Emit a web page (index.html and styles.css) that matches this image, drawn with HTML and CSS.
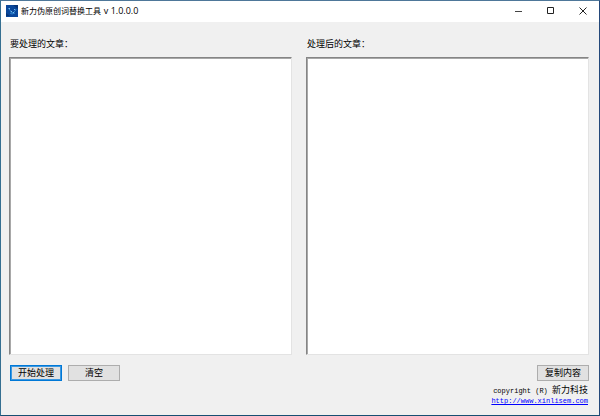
FILE: index.html
```html
<!DOCTYPE html>
<html lang="zh-CN">
<head>
<meta charset="utf-8">
<title>新力伪原创词替换工具</title>
<link rel="stylesheet" href="styles.css">
</head>
<body>
<div class="window">
  <header class="titlebar">
    <svg class="app-icon" viewBox="0 0 12 12" aria-hidden="true">
      <rect width="12" height="12" fill="#0a479b"/>
      <path d="M0 8L4 11H0zM7 0h5v4z" fill="#063477"/>
      <path d="M2 3l2 2 1 2 2 1 2-2 1-2M4 8l2 1 3-1" fill="none" stroke="#2e83cf"/>
      <path d="M3 3h1v1H3zM5 6h1v1H5zM8 4h1v1H8zM7 7h1v1H7z" fill="#79bce8"/>
    </svg>
    <h1 class="title">新力伪原创词替换工具 <span class="version">v 1.0.0.0</span></h1>
    <div class="controls">
      <button class="control" type="button" aria-label="最小化"><svg viewBox="0 0 8 8"><path d="M0 4.5h7" stroke="#444"/></svg></button>
      <button class="control" type="button" aria-label="最大化"><svg viewBox="0 0 8 8"><path d="M.5.5h6v6h-6z" stroke="#222"/></svg></button>
      <button class="control" type="button" aria-label="关闭"><svg viewBox="0 0 8 8"><path d="M.5.5l7 7M7.5.5l-7 7" stroke="#222"/></svg></button>
    </div>
  </header>
  <main class="content">
    <div class="panes">
      <div class="pane">
        <label class="label" for="source">要处理的文章：</label>
        <textarea class="editor" id="source"></textarea>
      </div>
      <div class="pane">
        <label class="label" for="result">处理后的文章：</label>
        <textarea class="editor" id="result"></textarea>
      </div>
    </div>
    <div class="actions">
      <button class="button primary" type="button">开始处理</button>
      <button class="button" type="button">清空</button>
      <button class="button copy" type="button">复制内容</button>
    </div>
    <footer class="footer">
      <div>copyright (R) <span class="company">新力科技</span></div>
      <a class="link" href="http://www.xinlisem.com">http://www.xinlisem.com</a>
    </footer>
  </main>
</div>
</body>
</html>
```
FILE: styles.css
```css
* {
  box-sizing: border-box;
}

body {
  margin: 0;
  font-family: "Noto Sans CJK SC", sans-serif;
  font-size: 9px;
  color: #000;
}

.window {
  display: flex;
  flex-direction: column;
  min-height: 100vh;
  background: #f0f0f0;
  border: 1px solid #356f91;
  border-top-color: #4e7799;
  border-right-color: #24487a;
  border-bottom-color: #174f72;
}

.titlebar {
  display: flex;
  align-items: center;
  height: 21px;
  padding: 0 0 2px 5px;
  background: #fff;
}

.app-icon {
  width: 12px;
  height: 12px;
  margin-right: 3px;
}

.title {
  flex: 1;
  margin: 0;
  font-size: 8px;
  font-weight: 400;
  line-height: 12px;
}

.version {
  margin-left: 1px;
  font-family: "Open Sans", sans-serif;
  font-size: 9px;
}

.controls {
  display: flex;
}

.control {
  display: flex;
  align-items: center;
  justify-content: center;
  width: 32px;
  height: 18px;
  padding: 0;
  border: 0;
  background: none;
}

.control svg {
  width: 8px;
  height: 8px;
  fill: none;
}

.content {
  display: flex;
  flex: 1;
  flex-direction: column;
  padding: 14px 10px 9px 8px;
}

.panes {
  display: grid;
  flex: 1;
  grid-template-columns: 1fr 1fr;
  gap: 14px;
}

.pane {
  display: flex;
  flex-direction: column;
}

.label {
  height: 21px;
  padding-left: 1px;
  line-height: 16px;
}

.editor {
  flex: 1;
  width: 100%;
  padding: 2px;
  border: 1px solid #e3e3e3;
  border-top-color: #858585;
  border-left-color: #858585;
  background: #fff;
  box-shadow: inset 1px 1px #a8a8a8;
  font: inherit;
  resize: none;
}

.actions {
  display: flex;
  gap: 6px;
  padding: 10px 0 0 1px;
}

.button {
  width: 52px;
  height: 16px;
  padding: 0;
  border: 1px solid #adadad;
  background: #e1e1e1;
  color: #000;
  font: inherit;
  line-height: 12px;
}

.primary {
  border-color: #0078d7;
  box-shadow: inset 0 0 0 1px #3c98e0;
}

.copy {
  margin-left: auto;
}

.footer {
  padding: 5px 1px 0 0;
  font-family: "Liberation Mono", "Noto Sans CJK SC", monospace;
  font-size: 7px;
  line-height: 10px;
  text-align: right;
}

.company {
  font-size: 9px;
  line-height: 8px;
}

.link {
  display: block;
  color: #00f;
}
```
